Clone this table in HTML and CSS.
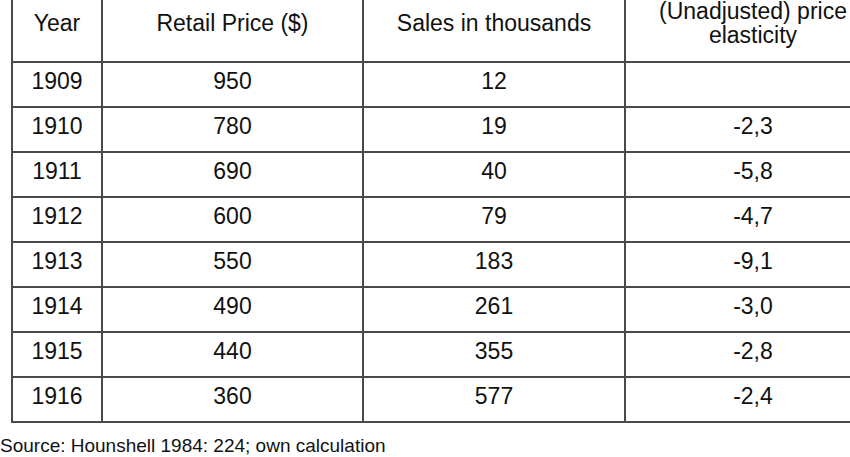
FILE: index.html
```html
<!DOCTYPE html>
<html lang="en">
<head>
<meta charset="utf-8">
<title>Price elasticity table</title>
<link rel="stylesheet" href="styles.css">
</head>
<body>
<div class="figure">
  <table class="data">
    <colgroup>
      <col class="c-year">
      <col class="c-price">
      <col class="c-sales">
      <col class="c-elast">
    </colgroup>
    <thead>
      <tr>
        <th>Year</th>
        <th>Retail Price ($)</th>
        <th>Sales in thousands</th>
        <th>(Unadjusted) price<br>elasticity</th>
      </tr>
    </thead>
    <tbody>
      <tr><td>1909</td><td>950</td><td>12</td><td></td></tr>
      <tr><td>1910</td><td>780</td><td>19</td><td>-2,3</td></tr>
      <tr><td>1911</td><td>690</td><td>40</td><td>-5,8</td></tr>
      <tr><td>1912</td><td>600</td><td>79</td><td>-4,7</td></tr>
      <tr><td>1913</td><td>550</td><td>183</td><td>-9,1</td></tr>
      <tr><td>1914</td><td>490</td><td>261</td><td>-3,0</td></tr>
      <tr><td>1915</td><td>440</td><td>355</td><td>-2,8</td></tr>
      <tr><td>1916</td><td>360</td><td>577</td><td>-2,4</td></tr>
    </tbody>
  </table>
  <p class="source">Source: Hounshell 1984: 224; own calculation</p>
</div>
</body>
</html>
```
FILE: styles.css
```css
html, body {
  margin: 0;
  padding: 0;
  overflow: hidden;
  background: #fff;
}

body {
  width: 850px;
  height: 457px;
  font-family: "Liberation Sans", Arial, sans-serif;
  color: #111;
}

.figure {
  display: flex;
  flex-direction: column;
  align-items: flex-start;
}

.data {
  border-collapse: collapse;
  table-layout: fixed;
  width: 869px;
  margin: -9px 0 0 11px;
  font-size: 23px;
  line-height: 24px;
}

.c-year { width: 90px; }
.c-price { width: 261px; }
.c-sales { width: 262px; }
.c-elast { width: 256px; }

.data th,
.data td {
  border: 2px solid #4a4a4a;
  text-align: center;
  vertical-align: middle;
  font-weight: normal;
  white-space: nowrap;
}

.data th {
  padding: 6px 4px 14px;
}

.data td {
  padding: 6px 4px 13px;
  height: 24px;
}

.source {
  margin: 12px 0 0 0;
  font-size: 19px;
  line-height: 22px;
}
```
